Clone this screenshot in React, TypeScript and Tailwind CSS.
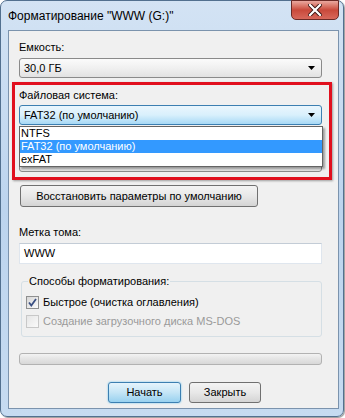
import React from "react";

const font = "font-['Liberation_Sans','Noto_Sans',sans-serif]";

function Arrow() {
    return (
        <svg className="w-[7px] h-[4px]" viewBox="0 0 7 4">
            <path d="M0 0h7L3.5 4z" fill="#000" />
        </svg>
    );
}

function Combo({ value, active, children }: { value?: string; active?: boolean; children?: React.ReactNode }) {
    return (
        <div
            className={`relative h-[20px] w-[303px] rounded-[3px] border flex items-center pl-[4px] pr-[6px] ${active
                ? "border-[#3c7fb1] bg-gradient-to-b from-[#eaf6fd] via-[#d9f0fc] to-[#a7d9f5]"
                : "border-[#8a8a8a] bg-gradient-to-b from-[#fbfbfb] via-[#f0f0f0] to-[#e2e2e2]"
                }`}
        >
            <span className="flex-1 leading-none">{value}</span>
            <Arrow />
            {children}
        </div>
    );
}

function Button({ label, primary, className = "" }: { label: string; primary?: boolean; className?: string }) {
    return (
        <div
            className={`h-[21px] rounded-[3px] border flex items-center justify-center ${primary
                ? "border-[#3c7fb1] bg-gradient-to-b from-[#e5f4fc] via-[#c4e5f6] to-[#98d1ef] shadow-[0_0_2px_#5fc1f0]"
                : "border-[#707070] bg-gradient-to-b from-[#f4f4f4] via-[#e8e8e8] to-[#d4d4d4]"
                } ${className}`}
        >
            {label}
        </div>
    );
}

function Check({ checked, disabled, label }: { checked?: boolean; disabled?: boolean; label: string }) {
    return (
        <div className="flex items-center gap-[4px] h-[19px]">
            <div
                className={`w-[13px] h-[13px] border flex items-center justify-center ${disabled
                    ? "border-[#c8c8c8] bg-gradient-to-br from-[#e6e6e6] to-[#fafafa]"
                    : "border-[#8e8f8f] bg-gradient-to-br from-[#d6d6d6] to-[#fbfbfb]"
                    }`}
            >
                {checked && (
                    <svg className="w-[9px] h-[9px]" viewBox="0 0 9 9">
                        <path d="M1 4.5l2.3 3L8 1" fill="none" stroke="#3a4f82" strokeWidth={1.8} />
                    </svg>
                )}
            </div>
            <span className={disabled ? "text-[#9a9a9a]" : "text-black"}>{label}</span>
        </div>
    );
}

export default function App() {
    return (
        <div className={`w-[345px] h-[418px] bg-white ${font} text-[11px] text-black`}>
            <div className="relative w-[344px] h-[417px] rounded-[7px] border border-[#52708f] bg-gradient-to-b from-[#d3e3f4] via-[#bcd4ee] to-[#c6dbf1] shadow-[1px_1px_1px_rgba(0,0,0,0.4)] flex flex-col">
                {/* title */}
                <div className="h-[29px] flex items-center pl-[7px] text-[12px] text-black leading-none">
                    Форматирование "WWW (G:)"
                </div>
                <div className="absolute top-[-1px] right-[4px] w-[48px] h-[20px] rounded-b-[5px] border border-[#6b2a26] bg-gradient-to-b from-[#e9a89f] via-[#c9493b] to-[#d7685b] flex items-center justify-center">
                    <svg className="w-[14px] h-[12px]" viewBox="0 0 14 12">
                        <path d="M2 1l10 10M12 1L2 11" stroke="#3b1512" strokeWidth={4} strokeLinecap="square" />
                        <path d="M2 1l10 10M12 1L2 11" stroke="#fff" strokeWidth={2.2} strokeLinecap="square" />
                    </svg>
                </div>

                {/* client area */}
                <div className="ml-[7px] w-[331px] h-[379px] border border-[#7b93ad] bg-[#f0f0f0] pl-[10px] pt-[9px] flex flex-col">
                    <div className="leading-[15px]">Емкость:</div>
                    <div className="mt-[3px]">
                        <Combo value="30,0 ГБ" />
                    </div>

                    <div className="mt-[10px] leading-[15px]">Файловая система:</div>
                    <div className="mt-[2px] relative z-10">
                        <Combo value="FAT32 (по умолчанию)" active>
                            <div className="absolute left-[-1px] top-[20px] w-[304px] bg-white border border-[#646464] shadow-[2px_2px_2px_rgba(0,0,0,0.35)]">
                                <div className="h-[13px] leading-[13px] pl-[1px]">NTFS</div>
                                <div className="h-[13px] leading-[13px] pl-[1px] bg-[#3399ff] text-white">FAT32 (по умолчанию)</div>
                                <div className="h-[13px] leading-[13px] pl-[1px]">exFAT</div>
                            </div>
                        </Combo>
                    </div>

                    {/* cluster size row, hidden under the open list */}
                    <div className="mt-[10px] h-[15px]" />
                    <div className="mt-[2px]">
                        <Combo />
                    </div>

                    <div className="mt-[13px]">
                        <Button label="Восстановить параметры по умолчанию" className="w-[238px] ml-[1px] h-[22px]" />
                    </div>

                    <div className="mt-[18px] leading-[15px]">Метка тома:</div>
                    <div className="mt-[3px] h-[21px] w-[303px] border border-[#dfe6ee] border-t-[#c3ccd6] bg-white flex items-center pl-[4px]">
                        WWW
                    </div>

                    <fieldset className="mt-[10px] ml-[2px] w-[301px] h-[63px] border border-[#d5dfe5] rounded-[3px] pl-[4px]">
                        <legend className="ml-[2px] px-[1px] leading-[15px]">Способы форматирования:</legend>
                        <div className="mt-[4px] flex flex-col">
                            <Check checked label="Быстрое (очистка оглавления)" />
                            <Check disabled label="Создание загрузочного диска MS-DOS" />
                        </div>
                    </fieldset>

                    <div className="mt-[16px] h-[12px] w-[303px] rounded-[3px] border border-[#b2b2b2] bg-gradient-to-b from-[#f3f3f3] via-[#e4e4e4] to-[#d8d8d8]" />

                    <div className="mt-[17px] flex gap-[8px] pl-[89px]">
                        <Button label="Начать" primary className="w-[73px]" />
                        <Button label="Закрыть" className="w-[72px]" />
                    </div>
                </div>

                {/* annotation */}
                <div className="absolute left-[11px] top-[81px] w-[320px] h-[98px] border-[3px] border-[#e1101e] shadow-[1px_1px_2px_rgba(0,0,0,0.35)] pointer-events-none z-20" />
            </div>
        </div>
    );
}
